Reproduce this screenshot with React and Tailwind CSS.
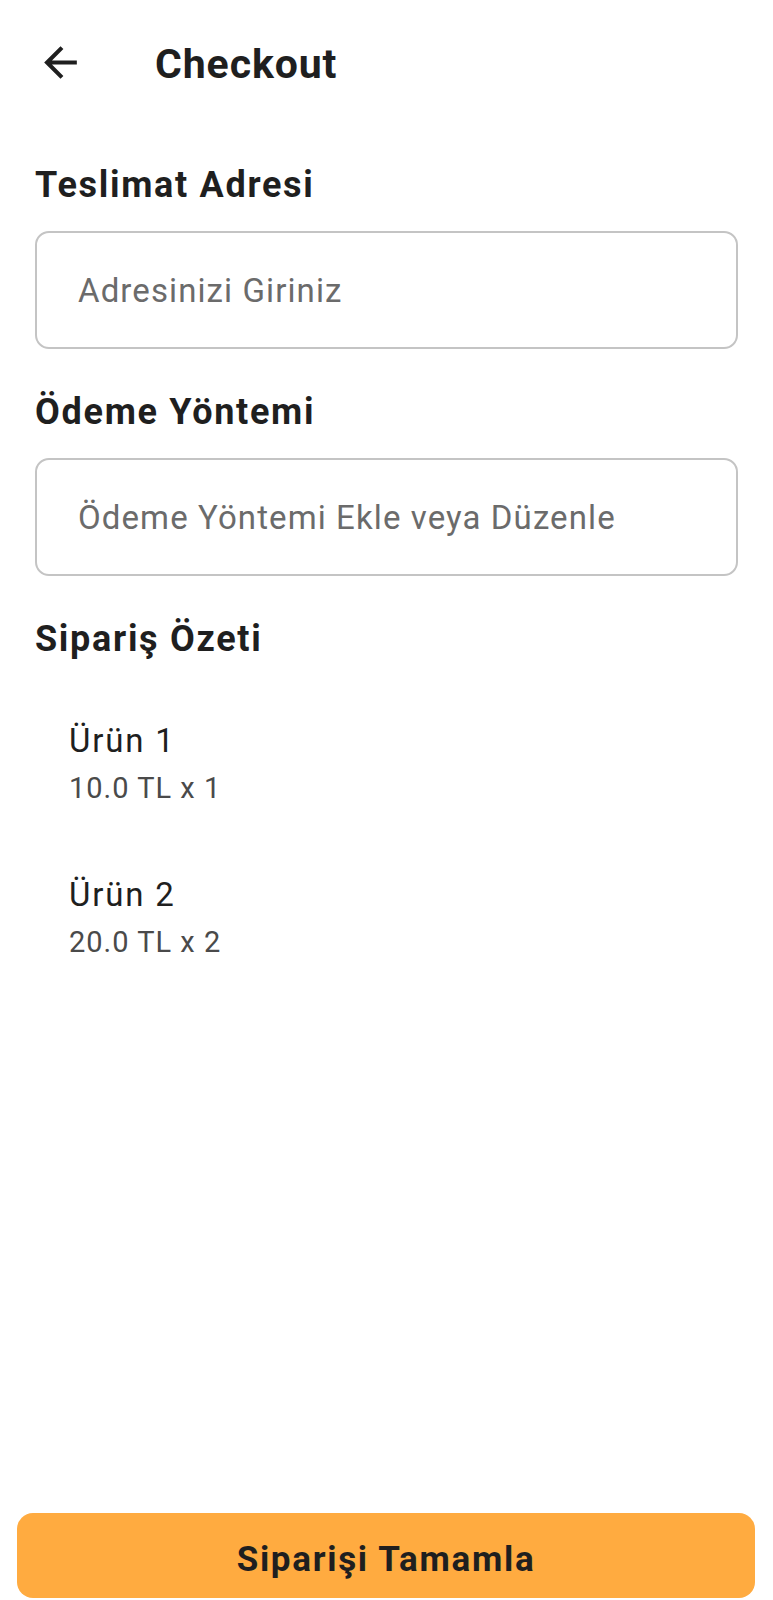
import { useState } from 'react';

const items = [
  { name: 'Ürün 1', price: '10.0', qty: 1 },
  { name: 'Ürün 2', price: '20.0', qty: 2 },
];

function BackArrow() {
  return (
    <svg xmlns="http://www.w3.org/2000/svg" className="w-[49px] h-[49px] text-[#1f1f1f]" viewBox="0 0 24 24" fill="currentColor">
      <path d="M20 11H7.83l5.59-5.59L12 4l-8 8 8 8 1.41-1.41L7.83 13H20v-2z" />
    </svg>
  );
}

function App() {
  const [address, setAddress] = useState('');

  return (
    <div className="min-h-[1600px] flex flex-col bg-white font-['Roboto',sans-serif] text-[#1f1f1f]">
      <div className="flex items-start pt-[38px] pl-[36px]">
        <button type="button" className="focus:outline-none">
          <BackArrow />
        </button>
        <h1 className="ml-[70px] mt-[6px] text-[41px] leading-none font-bold tracking-[0.9px]">Checkout</h1>
      </div>

      <div className="px-[35px]">
        <h2 className="mt-[80px] text-[36px] leading-none font-bold tracking-[1.7px]">Teslimat Adresi</h2>
        <div className="mt-[28px] h-[118px] flex items-center border-2 border-[#c4c4c4] rounded-[14px] pl-[41px] pr-4">
          <input
            type="text"
            value={address}
            onChange={(e) => setAddress(e.target.value)}
            placeholder="Adresinizi Giriniz"
            className="w-full bg-transparent text-[33px] leading-none tracking-[1.1px] text-[#1f1f1f] placeholder:text-[#6b6b6b] focus:outline-none"
          />
        </div>

        <h2 className="mt-[45px] text-[36px] leading-none font-bold tracking-[1.7px]">Ödeme Yöntemi</h2>
        <div className="mt-[28px] h-[118px] flex items-center border-2 border-[#c4c4c4] rounded-[14px] pl-[41px] pr-4">
          <span className="text-[33px] leading-none tracking-[1.1px] text-[#6b6b6b]">Ödeme Yöntemi Ekle veya Düzenle</span>
        </div>

        <h2 className="mt-[45px] text-[36px] leading-none font-bold tracking-[1.7px]">Sipariş Özeti</h2>

        <div className="pl-[34px]">
          {items.map((item, i) => (
            <div key={item.name} className={i === 0 ? 'mt-[67px]' : 'mt-[75px]'}>
              <div className="text-[33px] leading-none tracking-[1.8px]">{item.name}</div>
              <div className="mt-[17px] text-[29px] leading-none tracking-[1px] text-[#4a4a4a]">
                {item.price} TL x {item.qty}
              </div>
            </div>
          ))}
        </div>
      </div>

      <div className="flex-1" />

      <div className="pl-[17px] pr-[18px] pb-[2px]">
        <button
          type="button"
          className="w-full h-[85px] pt-[7px] rounded-[16px] bg-[#ffab40] text-[35px] leading-none font-bold tracking-[1.7px] text-[#1f1f1f] focus:outline-none"
        >
          Siparişi Tamamla
        </button>
      </div>
    </div>
  );
}

export default App;
